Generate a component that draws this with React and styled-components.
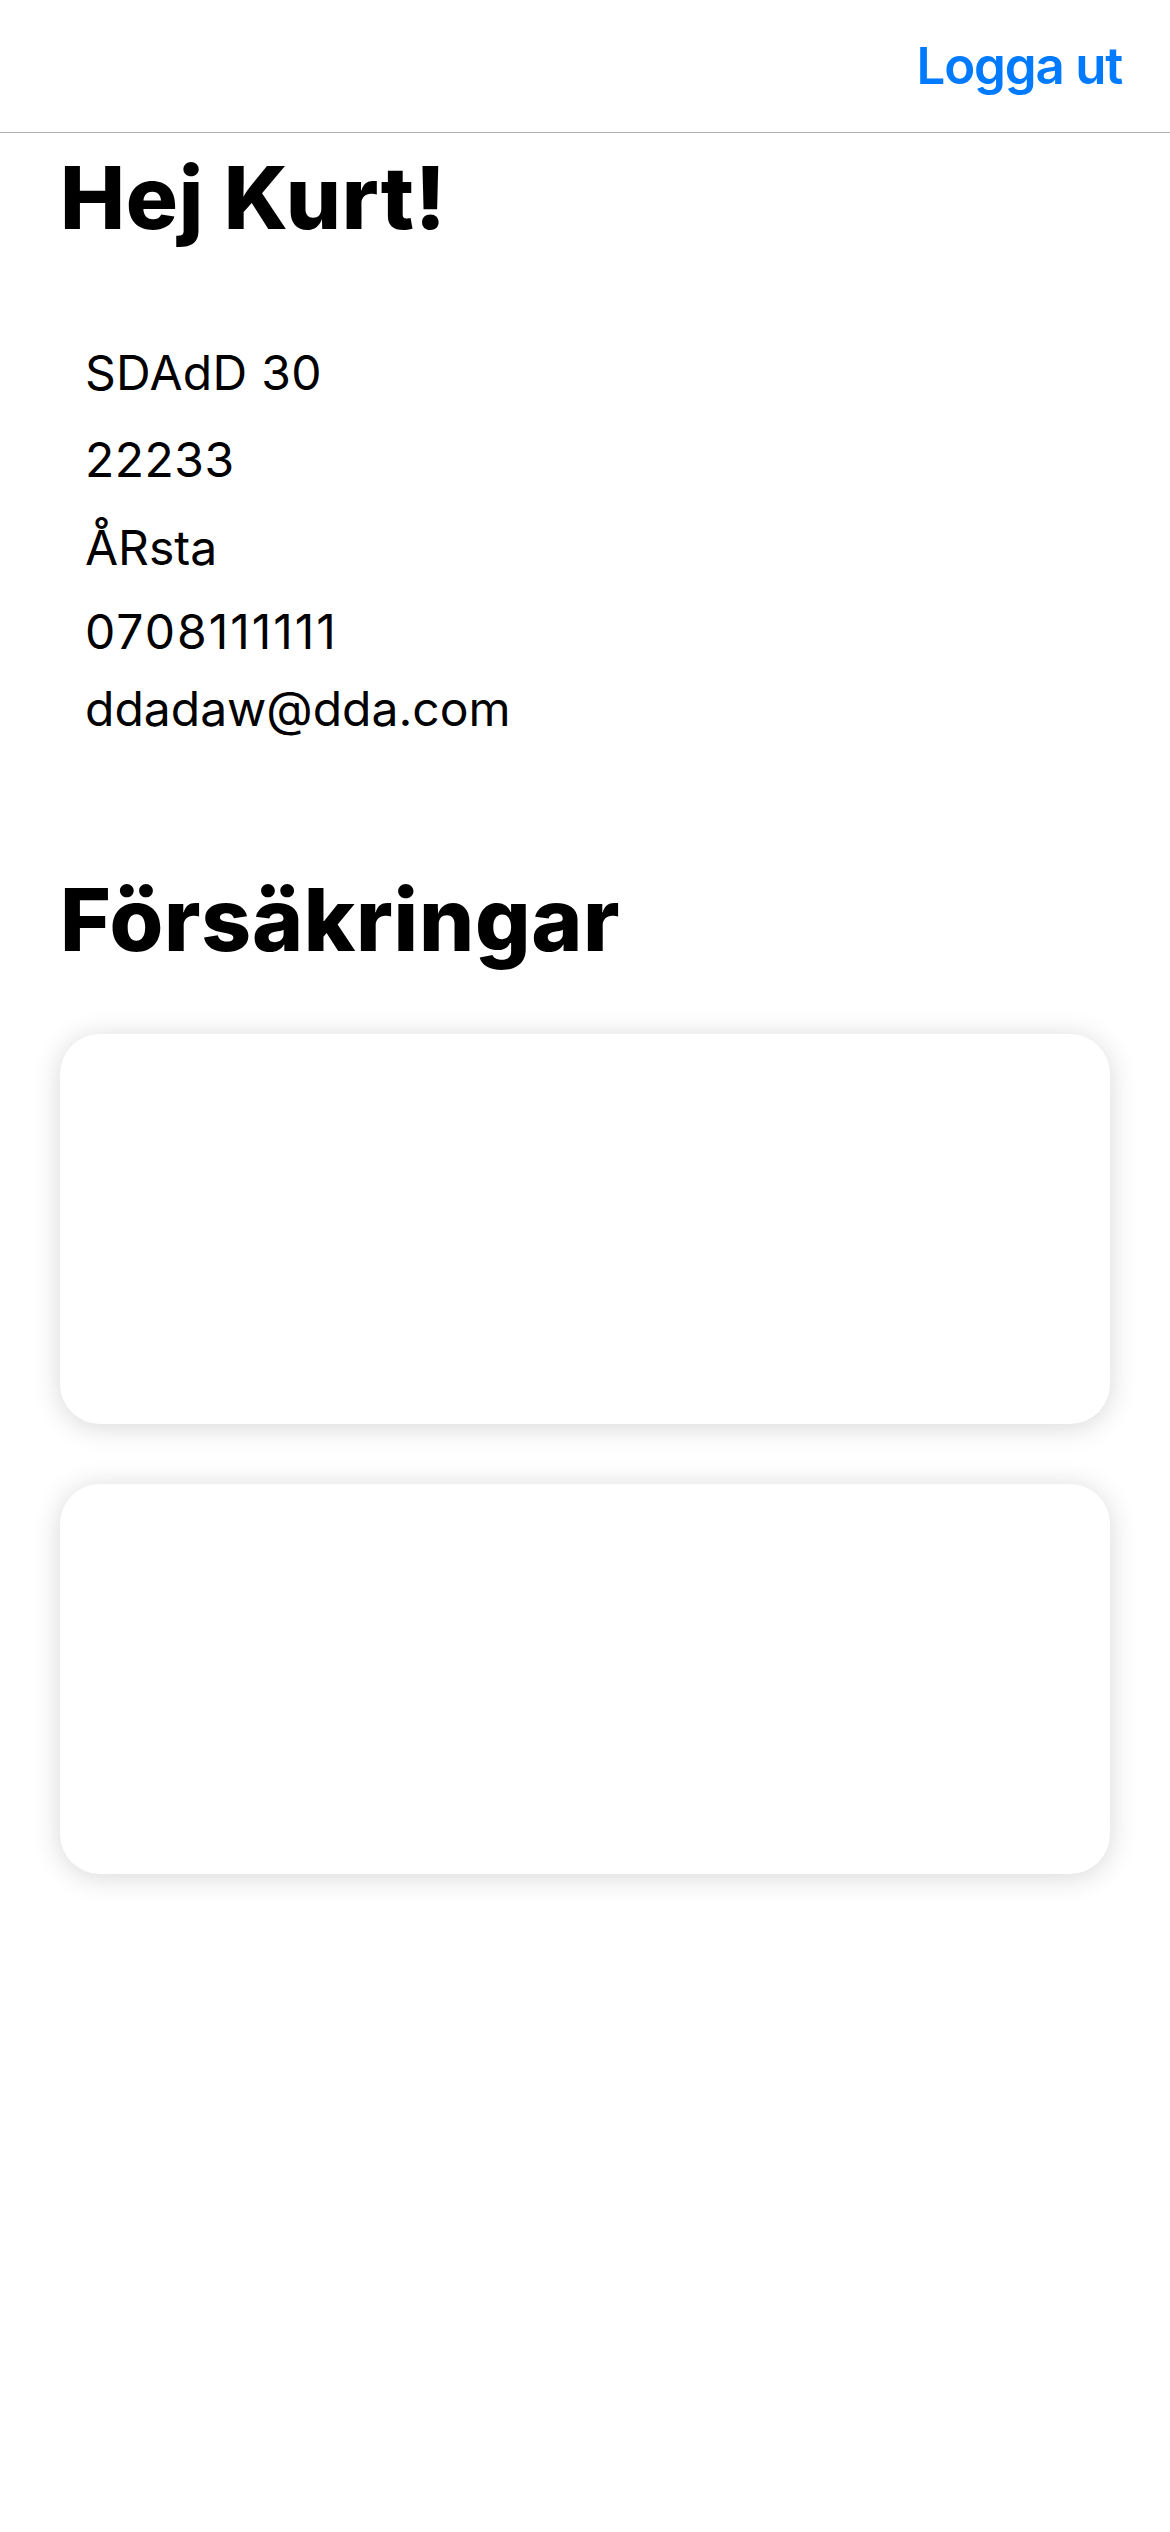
import React from "react";
import styled, { createGlobalStyle } from "styled-components";

const GlobalStyle = createGlobalStyle`
  html, body {
    margin: 0;
    padding: 0;
    background: #ffffff;
  }
  body {
    font-family: Inter, "Noto Sans", "Liberation Sans", sans-serif;
    color: #000000;
    -webkit-font-smoothing: antialiased;
  }
  * { box-sizing: border-box; }
`;

const Page = styled.div`
  width: 1170px;
  min-height: 2532px;
  background: #ffffff;
`;

const TopBar = styled.header`
  height: 133px;
  display: flex;
  justify-content: flex-end;
  align-items: flex-start;
  padding: 40px 48px 0 0;
  border-bottom: 1px solid #b0b0b0;
`;

const LogoutButton = styled.button`
  border: none;
  background: none;
  padding: 0;
  margin: 0;
  font-family: Inter, "Noto Sans", sans-serif;
  font-size: 51px;
  line-height: 51px;
  font-weight: 600;
  letter-spacing: -1.2px;
  color: #007aff;
  cursor: pointer;
`;

const Content = styled.main`
  display: flex;
  flex-direction: column;
  padding: 0 60px;
`;

const Title = styled.h1`
  margin: ${(p) => p.$top}px 0 0 0;
  font-size: 87px;
  line-height: 100px;
  font-weight: 800;
  letter-spacing: 0.7px;
`;

const InfoList = styled.div`
  display: flex;
  flex-direction: column;
  margin-top: 95px;
  padding-left: 25px;
`;

const InfoLine = styled.div`
  margin-top: ${(p) => p.$gap || 0}px;
  font-size: 48px;
  line-height: 60px;
  font-weight: 400;
  letter-spacing: ${(p) => p.$spacing || 0}px;
`;

const Cards = styled.div`
  display: flex;
  flex-direction: column;
  gap: 60px;
  margin-top: 64px;
`;

const Card = styled.div`
  height: 390px;
  background: #ffffff;
  border-radius: 40px;
  box-shadow: 0 3px 28px rgba(0, 0, 0, 0.16);
`;

const info = [
  { text: "SDAdD 30", gap: 0, spacing: 0.3 },
  { text: "22233", gap: 27, spacing: 0.5 },
  { text: "ÅRsta", gap: 28, spacing: 0 },
  { text: "0708111111", gap: 24, spacing: 2 },
  { text: "ddadaw@dda.com", gap: 17, spacing: 0 },
];

export default function App() {
  return (
    <Page>
      <GlobalStyle />
      <TopBar>
        <LogoutButton>Logga ut</LogoutButton>
      </TopBar>
      <Content>
        <Title $top={15}>Hej Kurt!</Title>
        <InfoList>
          {info.map((row) => (
            <InfoLine key={row.text} $gap={row.gap} $spacing={row.spacing}>
              {row.text}
            </InfoLine>
          ))}
        </InfoList>
        <Title $top={131}>Försäkringar</Title>
        <Cards>
          <Card />
          <Card />
        </Cards>
      </Content>
    </Page>
  );
}
